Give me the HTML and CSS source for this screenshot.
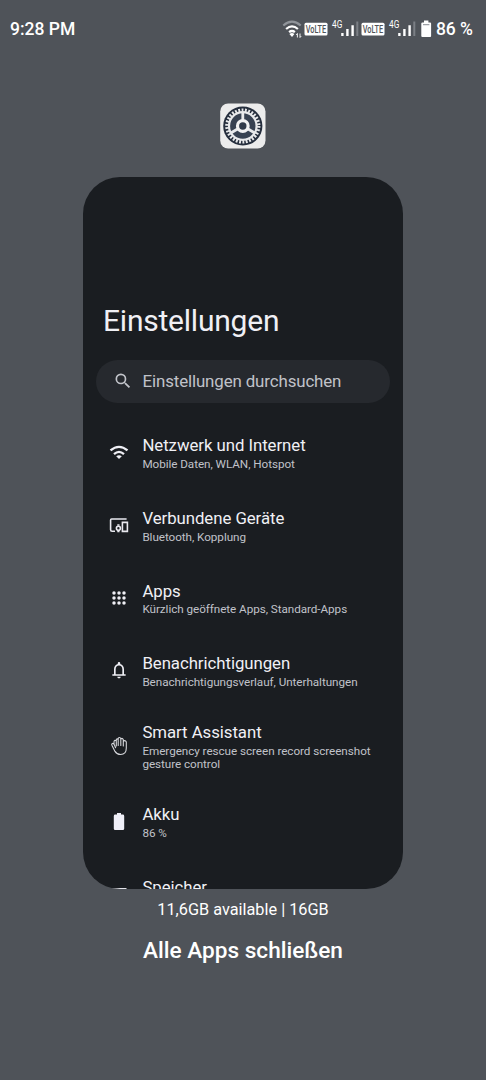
FILE: index.html
```html
<!DOCTYPE html>
<html lang="de">
<head>
<meta charset="utf-8">
<title>Letzte Apps</title>
<link rel="stylesheet" href="styles.css">
</head>
<body>
<div class="screen">
  <header class="status">
    <span class="clock">9:28 PM</span>
    <div class="indicators">
      <svg class="signals" width="152" height="24" viewBox="0 0 152 24">
        <g fill="none" stroke-width="2.2">
          <path d="M3.3 8.5Q12 .8 20.7 8.5" stroke="#90949a"/>
          <path d="M6.1 12Q12 6.8 17.9 12M9.1 15.2Q12 12.8 14.9 15.2" stroke="#fff"/>
        </g>
        <path d="M9.4 17Q12 15.2 14.4 17L12 20z" fill="#fff"/>
        <path d="M17.4 20.5v-4m-1.2 1.4 1.2-1.4M20 16.5v4m1.2-1.4-1.2 1.4" stroke="#fff" stroke-width=".9" fill="none"/>
        <g id="sim">
          <rect x="24.5" y="5.8" width="23" height="12.8" rx="1.5" fill="#fff"/>
          <text class="volte" x="25.8" y="16.3" textLength="20.4" lengthAdjust="spacingAndGlyphs">VoLTE</text>
          <text class="net" x="52" y="10.6" textLength="10.3" lengthAdjust="spacingAndGlyphs">4G</text>
          <path d="M61.2 16h2.4v3h-2.4zM66.2 12h2.4v7h-2.4zM71.4 8.2h2.4V19h-2.4z" fill="#fff"/>
          <path d="M76.3 4.5h2V19h-2z" fill="#7b7f85"/>
        </g>
        <use href="#sim" x="57"/>
        <path d="M144 3.6h4.4v1.8h1.7q1 0 1 1V19q0 1-1 1h-7.8q-1 0-1-1V6.4q0-1 1-1h1.7z" fill="#fff"/>
        <path d="M143 7.2h6.4v1H143z" fill="#858990"/>
      </svg>
      <span class="percent">86 %</span>
    </div>
  </header>

  <svg class="app-icon" width="46" height="46" viewBox="0 0 46 46">
    <rect x=".2" y=".5" width="45.3" height="45" rx="8" fill="#ececec"/>
    <circle cx="22.8" cy="23" r="19.6" fill="#252e3d"/>
    <circle cx="22.8" cy="23" r="15.9" fill="none" stroke="#e8e9eb" stroke-width="3.4" stroke-dasharray="1.85 1.479"/>
    <circle cx="22.8" cy="23" r="13.8" fill="#384252" stroke="#e8e9eb" stroke-width="2.2"/>
    <path d="M22.8 9v10M10.8 30l8-4.7M34.8 30l-8-4.7" stroke="#e8e9eb" stroke-width="2.8"/>
    <circle cx="22.8" cy="23" r="5.3" fill="#303a4a" stroke="#f1f1f2" stroke-width="3.2"/>
  </svg>

  <main class="card">
    <h1 class="title">Einstellungen</h1>
    <div class="search">
      <svg width="20" height="20" viewBox="0 0 24 24"><path fill="#c2c4ca" d="M15.5 14h-.79l-.28-.27A6.47 6.47 0 0 0 16 9.5 6.5 6.5 0 1 0 9.5 16c1.61 0 3.09-.59 4.23-1.57l.27.28v.79l5 4.99L20.49 19l-4.99-5zm-6 0a4.5 4.5 0 1 1 0-9 4.5 4.5 0 0 1 0 9z"/></svg>
      <span>Einstellungen durchsuchen</span>
    </div>
    <div class="list">
      <div class="row">
        <svg class="icon" width="20" height="20" viewBox="0 0 20 20"><path d="M1.5 8.4Q10 1.3 18.5 8.4M5 12.1Q10 7.7 15 12.1" fill="none" stroke="#efeff5" stroke-width="2.3"/><path d="M7.2 14.2Q10 12.1 12.8 14.2L10 17z" fill="#efeff5"/></svg>
        <div class="text"><span class="name">Netzwerk und Internet</span><span class="sub">Mobile Daten, WLAN, Hotspot</span></div>
      </div>
      <div class="row">
        <svg class="icon" width="20" height="20" viewBox="0 0 20 20" fill="none" stroke="#e9e9ef" stroke-width="1.6"><path d="M17.6 4H2.6Q1.6 4 1.6 5V14.7Q1.6 16.2 3.1 16.2H6M13.4 7.4H18.4V16.4H13.4z"/><circle cx="9.4" cy="13.2" r="2"/><path d="M8.3 10h2.2M8.3 16.4h2.2"/></svg>
        <div class="text"><span class="name">Verbundene Geräte</span><span class="sub">Bluetooth, Kopplung</span></div>
      </div>
      <div class="row">
        <svg class="icon" width="20" height="20" viewBox="0 0 20 20" fill="#efeff5"><circle cx="5" cy="5" r="1.75"/><circle cx="10" cy="5" r="1.75"/><circle cx="15" cy="5" r="1.75"/><circle cx="5" cy="10" r="1.75"/><circle cx="10" cy="10" r="1.75"/><circle cx="15" cy="10" r="1.75"/><circle cx="5" cy="15" r="1.75"/><circle cx="10" cy="15" r="1.75"/><circle cx="15" cy="15" r="1.75"/></svg>
        <div class="text"><span class="name">Apps</span><span class="sub">Kürzlich geöffnete Apps, Standard-Apps</span></div>
      </div>
      <div class="row">
        <svg class="icon" width="20" height="20" viewBox="0 0 24 24"><path fill="#efeff5" d="M12 22c1.1 0 2-.9 2-2h-4c0 1.1.9 2 2 2zm6-5v-6c0-3.07-1.63-5.64-4.5-6.32V4a1.5 1.5 0 0 0-3 0v.68C7.64 5.36 6 7.92 6 11v6H4v2h16v-2h-2zm-2 0H8v-6c0-2.48 1.51-4.5 4-4.5s4 2.02 4 4.5v6z"/></svg>
        <div class="text"><span class="name">Benachrichtigungen</span><span class="sub">Benachrichtigungsverlauf, Unterhaltungen</span></div>
      </div>
      <div class="row tall">
        <svg class="icon" width="20" height="20" viewBox="0 0 20 20" fill="none" stroke="#d5d6da" stroke-width="1.1" stroke-linecap="round" stroke-linejoin="round"><path d="M7.3 10V4.2Q7.3 2.9 8.2 2.9T9.2 4.2V9.5M9.2 3.6V2.7Q9.2 1.5 10.4 1.5T11.8 2.7V9.5M11.8 3.6Q12 2.4 12.9 2.4T14.3 3.8V10M14.3 5.6Q14.6 4.6 15.7 4.6T17.3 6V12Q17.3 18.5 11.6 18.5Q7.9 18.5 6 15.4L3 9.4Q2.3 7.8 3.4 7.4T5.2 8.5L6.6 11.8M7.3 5Q6.8 4.2 5.9 4.4T5 5.8V8.2"/></svg>
        <div class="text"><span class="name">Smart Assistant</span><span class="sub">Emergency rescue screen record screenshot<br>gesture control</span></div>
      </div>
      <div class="row">
        <svg class="icon" width="20" height="20" viewBox="0 0 20 20"><path fill="#efeff8" d="M8 2h4v1.6h1.8q1.4 0 1.4 1.3V17.7q0 1.3-1.4 1.3H6.2q-1.4 0-1.4-1.3V4.9q0-1.3 1.4-1.3H8z"/></svg>
        <div class="text"><span class="name">Akku</span><span class="sub">86 %</span></div>
      </div>
      <div class="row">
        <svg class="icon" width="20" height="20" viewBox="0 0 20 20"><path d="M2.5 4h15v4h-15zM2.5 12.5h15v4h-15z" fill="#e2e2e8"/></svg>
        <div class="text single"><span class="name">Speicher</span></div>
      </div>
    </div>
  </main>

  <p class="memory">11,6GB available | 16GB</p>
  <button class="clear">Alle Apps schließen</button>
</div>
</body>
</html>
```
FILE: styles.css
```css
* { box-sizing: border-box; }
body { margin: 0; background: #4f5359; font-family: Roboto, sans-serif; }
.screen { width: 486px; height: 1080px; overflow: hidden; display: flex; flex-direction: column; align-items: center; background: #4f5359; color: #fff; }
.status { width: 100%; height: 58px; flex: none; padding: 0 13px 0 10px; display: flex; align-items: center; justify-content: space-between; font-size: 17.5px; font-weight: 500; }
.indicators { display: flex; align-items: center; gap: 4px; }
.signals { display: block; }
.percent { width: 37px; white-space: nowrap; letter-spacing: -0.1px; }
.volte { font: 500 11.5px Roboto, sans-serif; fill: #4f5359; }
.net { font: 400 10.5px Roboto, sans-serif; fill: #fff; }
.app-icon { flex: none; margin-top: 45px; }
.card { width: 320px; height: 711.5px; flex: none; margin-top: 28px; padding: 124px 13px 0; border-radius: 37px; overflow: hidden; background: #1a1d21; }
.title { margin: 0 0 0 7px; font-size: 30px; line-height: 40px; font-weight: 400; letter-spacing: -0.22px; color: #f0f0f5; }
.search { height: 43px; margin-top: 18.5px; padding-left: 17px; border-radius: 22px; display: flex; align-items: center; gap: 9.5px; background: #26292e; color: #c0c2c9; font-size: 16.9px; letter-spacing: -0.13px; }
.list { margin: 15.2px 0 0 13px; }
.row { height: 72.75px; display: flex; align-items: center; gap: 13.4px; }
.tall { height: 78px; }
.icon { flex: none; margin-top: -3.8px; }
.text { display: flex; flex-direction: column; white-space: nowrap; margin-top: -3.2px; }
.single { padding-bottom: 15px; }
.name { font-size: 16.8px; line-height: 22px; letter-spacing: -0.05px; color: #f0f0f5; }
.sub { margin: 1.9px 0 -0.9px; font-size: 11.7px; line-height: 13.8px; letter-spacing: -0.05px; color: #c0c2c9; }
.memory { margin: 10px 0 0; font-size: 16.3px; line-height: 22px; }
.clear { margin-top: 14px; padding: 0; border: 0; background: none; color: #fff; font: 500 22.6px/32px Roboto, sans-serif; }
```
